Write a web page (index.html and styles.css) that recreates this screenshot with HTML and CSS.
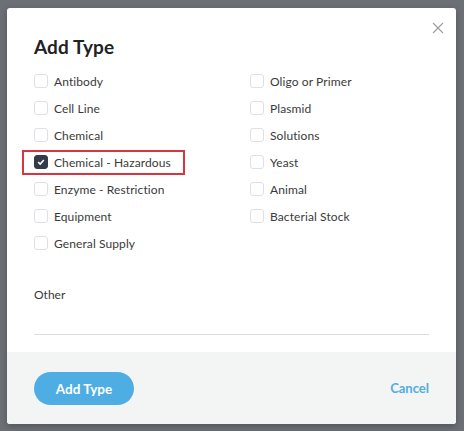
FILE: index.html
```html
<!DOCTYPE html>
<html lang="en">
  <head>
    <meta charset="UTF-8" />
    <meta name="viewport" content="width=device-width, initial-scale=1.0" />
    <title>Add Type</title>
    <link rel="stylesheet" href="styles.css">
  </head>
  <body>
    <div class="modal">
      <button class="close" aria-label="Close">
        <svg width="12" height="12" viewBox="0 0 12 12">
          <path d="M1 1L11 11M11 1L1 11" stroke="#9a9ca0" stroke-width="1.1" fill="none" />
        </svg>
      </button>
      <div class="modalBody">
        <h1>Add Type</h1>
        <div class="typeGrid">
          <div class="column">
            <label class="option"><span class="box"></span>Antibody</label>
            <label class="option"><span class="box"></span>Cell Line</label>
            <label class="option"><span class="box"></span>Chemical</label>
            <label class="option selected"><span class="box checked">
              <svg width="8" height="8" viewBox="0 0 8 8">
                <path d="M1.2 4.2L3.2 6L6.8 2" stroke="#fff" stroke-width="1.6" fill="none" />
              </svg>
            </span>Chemical - Hazardous</label>
            <label class="option"><span class="box"></span>Enzyme - Restriction</label>
            <label class="option"><span class="box"></span>Equipment</label>
            <label class="option"><span class="box"></span>General Supply</label>
          </div>
          <div class="column">
            <label class="option"><span class="box"></span>Oligo or Primer</label>
            <label class="option"><span class="box"></span>Plasmid</label>
            <label class="option"><span class="box"></span>Solutions</label>
            <label class="option"><span class="box"></span>Yeast</label>
            <label class="option"><span class="box"></span>Animal</label>
            <label class="option"><span class="box"></span>Bacterial Stock</label>
          </div>
        </div>
        <div class="otherField">
          <label for="other">Other</label>
          <input type="text" id="other" />
        </div>
      </div>
      <div class="modalFooter">
        <button class="primary">Add Type</button>
        <a class="cancel" href="#">Cancel</a>
      </div>
    </div>
  </body>
</html>
```

FILE: styles.css
```css
body {
  font-family: Lato, "Open Sans", sans-serif;
  background-color: #6c7076;
  color: #333;
  margin: 0;
  padding: 8px 8px 7px 7px;
  height: 431px;
  box-sizing: border-box;
}

.modal {
  position: relative;
  background-color: #fff;
  border-radius: 3px;
  width: 449px;
  height: 416px;
  display: flex;
  flex-direction: column;
  overflow: hidden;
  box-shadow: 0 2px 6px rgba(0, 0, 0, 0.25);
}

.close {
  position: absolute;
  top: 14px;
  right: 12px;
  background: none;
  border: none;
  padding: 0;
  width: 12px;
  height: 12px;
  cursor: pointer;
}

.modalBody {
  flex: 1;
  padding: 27px 27px 0 27px;
}

h1 {
  margin: 0 0 15px;
  font-size: 19px;
  font-weight: 700;
  color: #222;
  letter-spacing: 0.1px;
}

.typeGrid {
  display: grid;
  grid-template-columns: 216px 1fr;
}

.column {
  display: flex;
  flex-direction: column;
  gap: 11px;
}

.option {
  display: flex;
  align-items: center;
  gap: 6px;
  font-size: 12px;
  color: #3a3a3a;
  height: 16px;
  position: relative;
  letter-spacing: 0.1px;
}

.box {
  width: 14px;
  height: 14px;
  box-sizing: border-box;
  border: 1px solid #dfe0e3;
  border-radius: 3px;
  display: flex;
  align-items: center;
  justify-content: center;
}

.box.checked {
  background-color: #343b48;
  border-color: #343b48;
}

.selected::after {
  content: "";
  position: absolute;
  left: -12px;
  top: -4px;
  width: 163px;
  height: 25px;
  box-sizing: border-box;
  border: 2px solid #d8353f;
}

.otherField {
  margin-top: 36px;
  display: flex;
  flex-direction: column;
}

.otherField label {
  font-size: 12px;
  color: #3a3a3a;
}

input[type="text"] {
  border: none;
  border-bottom: 1px solid #dcdde1;
  height: 32px;
  outline: none;
  padding: 0;
}

.modalFooter {
  background-color: #f3f4f4;
  height: 72px;
  padding: 0 27px;
  display: flex;
  align-items: center;
  justify-content: space-between;
}

.primary {
  font-family: Lato, "Open Sans", sans-serif;
  background-color: #4eaee4;
  color: #fff;
  border: none;
  border-radius: 17px;
  width: 100px;
  height: 33px;
  font-size: 13.5px;
  font-weight: 700;
  margin-top: 1px;
}

.cancel {
  color: #4eaee4;
  font-size: 13px;
  font-weight: 700;
  text-decoration: none;
  margin-bottom: 1px;
}
```
